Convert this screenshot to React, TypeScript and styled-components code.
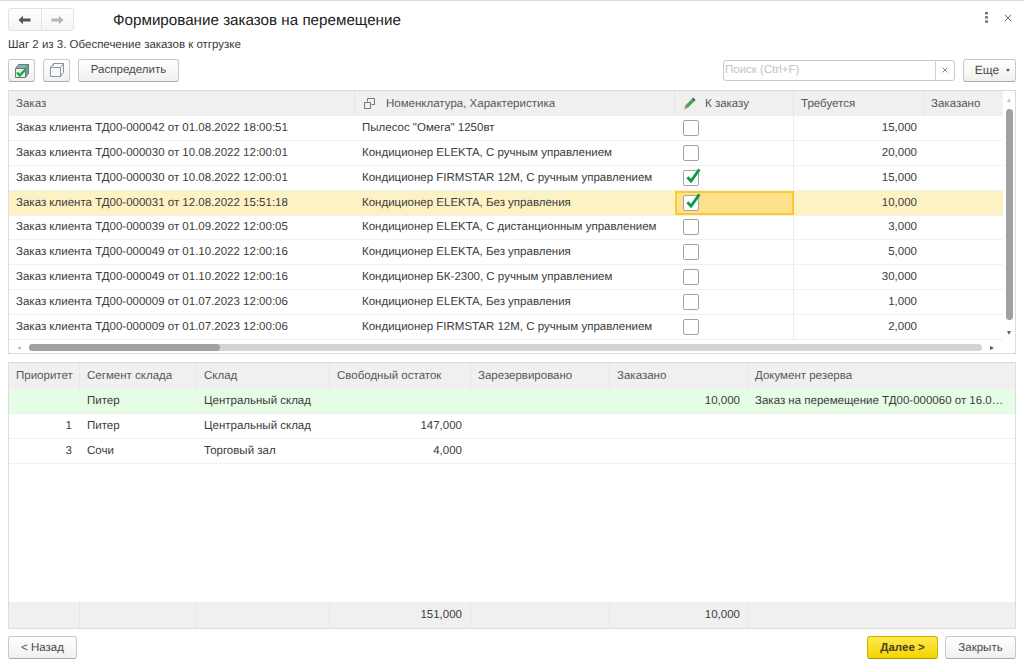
import React from 'react';
import styled, { createGlobalStyle } from 'styled-components';

const GlobalStyle = createGlobalStyle`
  html, body { margin: 0; padding: 0; background: #fff; }
  body {
    font-family: "Liberation Sans", Arial, sans-serif;
    color: #4b4b4b;
    font-size: 11.5px;
    text-rendering: geometricPrecision;
  }
`;

const Page = styled.div`
  width: 1024px;
  height: 667px;
  overflow: hidden;
  box-sizing: border-box;
  display: flex;
  flex-direction: column;
  border-top: 1px solid #dcdcdc;
  padding: 7px 8px 0 8px;
`;

const Header = styled.div`
  display: flex;
  align-items: center;
  height: 23px;
`;

const NavGroup = styled.div`
  display: flex;
  width: 66px;
  height: 23px;
  border: 1px solid #e2e2e2;
  border-radius: 3px;
  box-sizing: border-box;
  background: linear-gradient(#fff, #f4f4f4);
`;

const NavButton = styled.div<{ $divided?: boolean }>`
  flex: 1;
  display: flex;
  align-items: center;
  justify-content: center;
  border-right: ${p => (p.$divided ? '1px solid #e2e2e2' : 'none')};
`;

const Title = styled.div`
  margin-left: 39px;
  padding-top: 2px;
  font-size: 15.2px;
  color: #222;
  flex: 1;
`;

const HeaderTools = styled.div`
  display: flex;
  align-items: center;
  gap: 16px;
  padding-right: 4px;
  margin-top: -4px;
`;

const StepText = styled.div`
  margin-top: 6px;
  height: 17px;
  line-height: 17px;
  font-size: 11.5px;
  color: #3a3a3a;
`;

const Toolbar = styled.div`
  display: flex;
  align-items: center;
  margin-top: 4px;
  height: 24px;
`;

const IconButton = styled.div`
  width: 27px;
  height: 23px;
  box-sizing: border-box;
  margin-right: 8px;
  display: flex;
  align-items: center;
  justify-content: center;
  border: 1px solid #c8c8c8;
  border-bottom-color: #a9a9a9;
  border-radius: 3px;
  background: linear-gradient(#fff, #f0f0f0);
`;

const Button = styled.div<{ $width: number; $primary?: boolean }>`
  width: ${p => p.$width}px;
  height: 23px;
  box-sizing: border-box;
  display: flex;
  align-items: center;
  justify-content: center;
  font-size: 11.5px;
  font-weight: ${p => (p.$primary ? 700 : 400)};
  color: ${p => (p.$primary ? '#4a4220' : '#4b4b4b')};
  border: 1px solid ${p => (p.$primary ? '#c9b400' : '#c8c8c8')};
  border-bottom-color: ${p => (p.$primary ? '#a89600' : '#a9a9a9')};
  border-radius: 3px;
  background: ${p => (p.$primary ? 'linear-gradient(#ffe94d, #f5d500)' : 'linear-gradient(#fff, #f0f0f0)')};
`;

const Spacer = styled.div`
  flex: 1;
`;

const Search = styled.div`
  display: flex;
  width: 232px;
  height: 21px;
  box-sizing: border-box;
  margin-right: 8px;
  border: 1px solid #c9c9c9;
  border-radius: 3px;
  background: #fff;
`;

const SearchText = styled.div`
  flex: 1;
  padding-left: 1px;
  line-height: 19px;
  font-size: 11.5px;
  color: #c4c4c4;
  border-right: 1px solid #d0d0d0;
`;

const SearchClear = styled.div`
  width: 18px;
  display: flex;
  align-items: center;
  justify-content: center;
`;

const MoreButtonLabel = styled.span`
  font-size: 12px;
  margin-left: 6px;
`;

const MoreCaret = styled.span`
  margin-left: 7px;
  width: 0;
  height: 0;
  border-left: 2.5px solid transparent;
  border-right: 2.5px solid transparent;
  border-top: 3px solid #555;
`;

const Panel = styled.div<{ $height: number; $top: number }>`
  height: ${p => p.$height}px;
  margin-top: ${p => p.$top}px;
  box-sizing: border-box;
  display: flex;
  flex-direction: column;
  border: 1px solid #dcdcdc;
  overflow: hidden;
`;

const TableArea = styled.div`
  flex: 1;
  min-height: 0;
  display: flex;
`;

const TableBody = styled.div`
  flex: 1;
  min-width: 0;
  display: flex;
  flex-direction: column;
`;

const Row = styled.div<{ $cols: string; $height: number; $bg?: string; $line?: boolean }>`
  display: grid;
  grid-template-columns: ${p => p.$cols};
  height: ${p => p.$height}px;
  flex: none;
  box-sizing: border-box;
  background: ${p => p.$bg ?? 'transparent'};
  border-bottom: ${p => (p.$line === false ? 'none' : '1px solid #f0f0f0')};
`;

const HeadCell = styled.div<{ $last?: boolean }>`
  display: flex;
  align-items: center;
  padding-left: 7px;
  min-width: 0;
  white-space: nowrap;
  overflow: hidden;
  color: #595959;
  font-size: 11.5px;
  border-right: ${p => (p.$last ? 'none' : '1px solid #e6e6e6')};
`;

const HeadIcon = styled.span<{ $gap: number }>`
  display: inline-flex;
  align-items: center;
  margin-left: 2px;
  margin-right: ${p => p.$gap}px;
`;

const Cell = styled.div<{ $right?: boolean; $rule?: boolean; $pad?: number }>`
  display: flex;
  align-items: center;
  justify-content: ${p => (p.$right ? 'flex-end' : 'flex-start')};
  padding: 0 ${p => (p.$right ? p.$pad ?? 7 : 0)}px 0 ${p => (p.$right ? 0 : p.$pad ?? 7)}px;
  min-width: 0;
  white-space: nowrap;
  overflow: hidden;
  font-size: 11.5px;
  color: #3c3c3c;
  border-right: ${p => (p.$rule ? '1px solid #e6e6e6' : 'none')};
`;

const CheckCell = styled.div<{ $active?: boolean }>`
  display: flex;
  align-items: center;
  padding-left: ${p => (p.$active ? 6 : 8)}px;
  box-sizing: border-box;
  border-right: 1px solid #ececec;
  background: ${p => (p.$active ? '#fde18c' : 'transparent')};
  border: ${p => (p.$active ? '2px solid #fdc92f' : undefined)};
`;

const CheckBox = styled.div`
  position: relative;
  width: 16px;
  height: 16px;
  box-sizing: border-box;
  border: 1px solid #a3a3a3;
  border-radius: 2px;
  background: #fff;
`;

const CheckMark = styled.svg`
  position: absolute;
  left: 1px;
  top: -4px;
`;

const VScroll = styled.div`
  width: 12px;
  flex: none;
  display: flex;
  flex-direction: column;
  align-items: center;
  padding: 7px 0 4px;
`;

const ScrollArrow = styled.div<{ $dir: 'up' | 'down' | 'left' | 'right'; $color?: string }>`
  width: 0;
  height: 0;
  flex: none;
  border-style: solid;
  border-color: transparent;
  ${p => {
    const c = p.$color ?? '#777';
    if (p.$dir === 'up') return `border-width: 0 2.5px 4px; border-bottom-color: ${c};`;
    if (p.$dir === 'down') return `border-width: 4px 2.5px 0; border-top-color: ${c};`;
    if (p.$dir === 'left') return `border-width: 2.5px 4px 2.5px 0; border-right-color: ${c};`;
    return `border-width: 2.5px 0 2.5px 4px; border-left-color: ${c};`;
  }}
`;

const VThumb = styled.div`
  width: 7px;
  height: 211px;
  margin-top: 7px;
  border-radius: 4px;
  background: #a0a0a0;
`;

const VRest = styled.div`
  flex: 1;
`;

const HScroll = styled.div`
  height: 14px;
  flex: none;
  box-sizing: border-box;
  display: flex;
  align-items: center;
  padding: 3px 21px 0 8px;
`;

const HTrack = styled.div`
  flex: 1;
  display: flex;
  height: 7px;
  margin-left: 8px;
  margin-right: 8px;
  border-radius: 4px;
  background: #d3d3d3;
`;

const HThumb = styled.div`
  width: 191px;
  border-radius: 4px;
  background: #a0a0a0;
`;

const LowerRows = styled.div`
  flex: 1;
  min-height: 0;
`;

const Footer = styled.div`
  display: flex;
  align-items: flex-start;
  gap: 7px;
  margin-top: 7px;
`;

const orderCols = '346px 320px 119px 130px 79px';
const lowerCols = '71px 117px 133px 141px 139px 138px 1fr';

const orders = [
  ['Заказ клиента ТД00-000042 от 01.08.2022 18:00:51', 'Пылесос "Омега" 1250вт', false, '15,000'],
  ['Заказ клиента ТД00-000030 от 10.08.2022 12:00:01', 'Кондиционер ELEKTA, С ручным управлением', false, '20,000'],
  ['Заказ клиента ТД00-000030 от 10.08.2022 12:00:01', 'Кондиционер FIRMSTAR 12M, С ручным управлением', true, '15,000'],
  ['Заказ клиента ТД00-000031 от 12.08.2022 15:51:18', 'Кондиционер ELEKTA, Без управления', true, '10,000'],
  ['Заказ клиента ТД00-000039 от 01.09.2022 12:00:05', 'Кондиционер ELEKTA, С дистанционным управлением', false, '3,000'],
  ['Заказ клиента ТД00-000049 от 01.10.2022 12:00:16', 'Кондиционер ELEKTA, Без управления', false, '5,000'],
  ['Заказ клиента ТД00-000049 от 01.10.2022 12:00:16', 'Кондиционер БК-2300, С ручным управлением', false, '30,000'],
  ['Заказ клиента ТД00-000009 от 01.07.2023 12:00:06', 'Кондиционер ELEKTA, Без управления', false, '1,000'],
  ['Заказ клиента ТД00-000009 от 01.07.2023 12:00:06', 'Кондиционер FIRMSTAR 12M, С ручным управлением', false, '2,000'],
] as const;

const lowerHead = ['Приоритет', 'Сегмент склада', 'Склад', 'Свободный остаток', 'Зарезервировано', 'Заказано', 'Документ резерва'];

const lowerRows = [
  { prio: '', seg: 'Питер', store: 'Центральный склад', free: '', ordered: '10,000', doc: 'Заказ на перемещение ТД00-000060 от 16.0…', bg: '#e5fde5' },
  { prio: '1', seg: 'Питер', store: 'Центральный склад', free: '147,000', ordered: '', doc: '' },
  { prio: '3', seg: 'Сочи', store: 'Торговый зал', free: '4,000', ordered: '', doc: '' },
];

const ArrowIcon = ({ flip, color }: { flip?: boolean; color: string }) => (
  <svg width="13" height="10" viewBox="0 0 13 10" style={flip ? { transform: 'scaleX(-1)' } : undefined}>
    <path d="M0.5 5L5 0.8V3.6H12.5V6.4H5V9.2Z" fill={color} />
  </svg>
);

const CubeIcon = () => (
  <svg width="16" height="16" viewBox="0 0 16 16" fill="none" stroke="#8a949c">
    <path d="M1.5 5.5H11.5V14.5H1.5Z" fill="#f4f6f8" />
    <path d="M1.5 5.5L4.5 1.5H14.5L11.5 5.5M11.5 14.5L14.5 10.5V1.5" />
    <path d="M4.5 1.5V4" />
  </svg>
);

const CubeCheckIcon = () => (
  <svg width="18" height="17" viewBox="0 0 18 17" fill="none">
    <path d="M2.5 6.5H12.5V15.5H2.5Z" fill="#e6f0ee" stroke="#5f7f85" />
    <path d="M2.5 6.5L5.5 2.5H15.5L12.5 6.5Z" fill="#8fb0a8" stroke="#5f7f85" />
    <path d="M12.5 15.5L15.5 11.5V2.5L12.5 6.5Z" fill="#7a9c98" stroke="#5f7f85" />
    <path d="M4 10.5L6.8 13.4L12.8 7" stroke="#1fae2f" strokeWidth="2.4" />
  </svg>
);

const PencilIcon = () => (
  <svg width="13" height="13" viewBox="0 0 13 13">
    <path d="M3.6 11L1.2 8.6L7.8 2L10.2 4.4Z" fill="#3fa85a" />
    <path d="M7.8 2L9.2 0.6L11.6 3L10.2 4.4Z" fill="#50585c" />
    <path d="M1.2 8.6L3.6 11L0.2 12.4Z" fill="#b98d50" />
  </svg>
);

const LinkIcon = () => (
  <svg width="11" height="11" viewBox="0 0 11 11" fill="none" stroke="#777">
    <path d="M3.5 3.5V0.5H10.5V6.5H7.5" />
    <path d="M0.5 4.5H6.5V10.5H0.5Z" />
  </svg>
);

const Mark = () => (
  <CheckMark width="16" height="18" viewBox="0 0 16 18">
    <path d="M2.4 10.2L6 14L14.4 2.4" fill="none" stroke="#0b9a4a" strokeWidth="2.8" />
  </CheckMark>
);

const MenuDots = () => (
  <svg width="3" height="11" viewBox="0 0 3 11" fill="#777">
    <rect y="0" width="3" height="2.4" />
    <rect y="4.2" width="3" height="2.4" />
    <rect y="8.4" width="3" height="2.4" />
  </svg>
);

const Cross = ({ size, color }: { size: number; color: string }) => (
  <svg width={size} height={size} viewBox="0 0 10 10" fill="none" stroke={color} strokeWidth="1.2">
    <path d="M1 1L9 9M9 1L1 9" />
  </svg>
);

export default function App() {
  return (
    <Page>
      <GlobalStyle />
      <Header>
        <NavGroup>
          <NavButton $divided>
            <ArrowIcon color="#555" />
          </NavButton>
          <NavButton>
            <ArrowIcon flip color="#b5b5b5" />
          </NavButton>
        </NavGroup>
        <Title>Формирование заказов на перемещение</Title>
        <HeaderTools>
          <MenuDots />
          <Cross size={8} color="#666" />
        </HeaderTools>
      </Header>
      <StepText>Шаг 2 из 3. Обеспечение заказов к отгрузке</StepText>
      <Toolbar>
        <IconButton>
          <CubeCheckIcon />
        </IconButton>
        <IconButton>
          <CubeIcon />
        </IconButton>
        <Button $width={101}>Распределить</Button>
        <Spacer />
        <Search>
          <SearchText>Поиск (Ctrl+F)</SearchText>
          <SearchClear>
            <Cross size={6} color="#555" />
          </SearchClear>
        </Search>
        <Button $width={53}>
          <MoreButtonLabel>Еще</MoreButtonLabel>
          <MoreCaret />
        </Button>
      </Toolbar>

      <Panel $height={264} $top={8}>
        <TableArea>
          <TableBody>
            <Row $cols={orderCols} $height={25} $bg="#f0f0f0" $line={false}>
              <HeadCell>Заказ</HeadCell>
              <HeadCell>
                <HeadIcon $gap={11}>
                  <LinkIcon />
                </HeadIcon>
                Номенклатура, Характеристика
              </HeadCell>
              <HeadCell>
                <HeadIcon $gap={8}>
                  <PencilIcon />
                </HeadIcon>
                К заказу
              </HeadCell>
              <HeadCell>Требуется</HeadCell>
              <HeadCell $last>Заказано</HeadCell>
            </Row>
            {orders.map(([order, item, checked, need], i) => (
              <Row key={i} $cols={orderCols} $height={24.875} $bg={i === 3 ? '#fdf2c4' : undefined}>
                <Cell>{order}</Cell>
                <Cell>{item}</Cell>
                <CheckCell $active={i === 3}>
                  <CheckBox>{checked && <Mark />}</CheckBox>
                </CheckCell>
                <Cell $right>{need}</Cell>
                <Cell />
              </Row>
            ))}
          </TableBody>
          <VScroll>
            <ScrollArrow $dir="up" $color="#c4c4c4" />
            <VThumb />
            <VRest />
            <ScrollArrow $dir="down" $color="#666" />
          </VScroll>
        </TableArea>
        <HScroll>
          <ScrollArrow $dir="left" $color="#c4c4c4" />
          <HTrack>
            <HThumb />
          </HTrack>
          <ScrollArrow $dir="right" $color="#555" />
        </HScroll>
      </Panel>

      <Panel $height={267} $top={8}>
        <Row $cols={lowerCols} $height={26} $bg="#f0f0f0" $line={false}>
          {lowerHead.map((h, i) => (
            <HeadCell key={h} $last={i === lowerHead.length - 1}>
              {h}
            </HeadCell>
          ))}
        </Row>
        <LowerRows>
          {lowerRows.map((r, i) => (
            <Row key={i} $cols={lowerCols} $height={25} $bg={r.bg}>
              <Cell $right $pad={8}>
                {r.prio}
              </Cell>
              <Cell>{r.seg}</Cell>
              <Cell>{r.store}</Cell>
              <Cell $right $pad={9}>
                {r.free}
              </Cell>
              <Cell />
              <Cell $right $pad={8}>
                {r.ordered}
              </Cell>
              <Cell>{r.doc}</Cell>
            </Row>
          ))}
        </LowerRows>
        <Row $cols={lowerCols} $height={26} $bg="#f0f0f0" $line={false}>
          <HeadCell />
          <HeadCell />
          <HeadCell />
          <Cell $right $rule $pad={8}>
            151,000
          </Cell>
          <HeadCell />
          <Cell $right $rule $pad={7}>
            10,000
          </Cell>
          <HeadCell $last />
        </Row>
      </Panel>

      <Footer>
        <Button $width={69}>&lt; Назад</Button>
        <Spacer />
        <Button $width={71} $primary>
          Далее &gt;
        </Button>
        <Button $width={71}>Закрыть</Button>
      </Footer>
    </Page>
  );
}
